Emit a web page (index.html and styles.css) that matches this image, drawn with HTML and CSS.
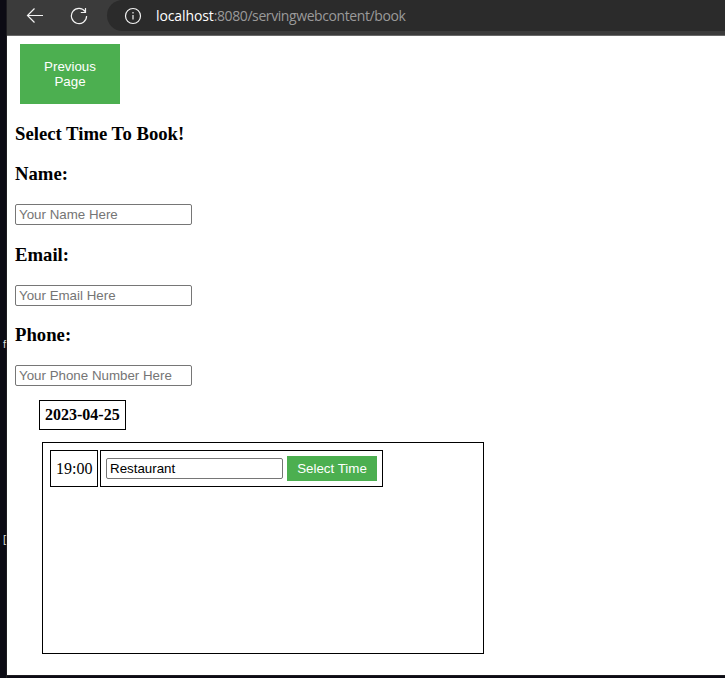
FILE: index.html
```html
<!DOCTYPE html>
<html lang="en">
<head>
<meta charset="utf-8">
<title>Book</title>
<link rel="stylesheet" href="styles.css">
</head>
<body>
<div class="desktop">
  <aside class="behind"><span class="behind-f">f</span><span class="behind-d">[</span></aside>
  <div class="window">
    <header class="toolbar">
      <svg class="icon back" width="18" height="16" viewBox="0 0 18 16"><path d="M17 7.5H1.5M8.5 .5L1.5 7.5L8.5 14.5"/></svg>
      <svg class="icon reload" width="18" height="18" viewBox="0 0 18 18"><path d="M15.2 4.6A7.6 7.6 0 1 0 16.6 9M15.5 1V5.5H10.8"/></svg>
      <div class="address">
        <svg class="icon info" width="18" height="18" viewBox="0 0 18 18"><circle cx="9" cy="9" r="7.5"/><path d="M9 8V12.5M9 5V6.4"/></svg>
        <span class="url"><b>localhost</b>:8080/servingwebcontent/book</span>
      </div>
    </header>
    <main class="page">
      <button class="previous">Previous Page</button>
      <h3>Select Time To Book!</h3>
      <h3>Name:</h3>
      <input class="field" type="text" placeholder="Your Name Here">
      <h3>Email:</h3>
      <input class="field" type="text" placeholder="Your Email Here">
      <h3>Phone:</h3>
      <input class="field" type="text" placeholder="Your Phone Number Here">
      <div class="date">2023-04-25</div>
      <section class="times">
        <div class="row">
          <div class="cell hour">19:00</div>
          <div class="cell choice">
            <input class="field" type="text" value="Restaurant">
            <button class="select">Select Time</button>
          </div>
        </div>
      </section>
    </main>
  </div>
</div>
</body>
</html>
```
FILE: styles.css
```css
* { box-sizing: border-box; }
body { margin: 0; background: #0c0b14; color: #000; font: 16px/18px "Liberation Serif", serif; }
.desktop { display: flex; height: 678px; overflow: hidden; }
.behind { width: 7px; flex: none; padding: 337px 0 0 3px; border-right: 1px solid #1d1c20; color: #ddd; font: 11px/15px "Liberation Sans", sans-serif; }
.behind span { display: block; }
.behind-d { margin-top: 180px; }
.window { flex: 1; height: 676px; background: #fff; border-bottom: 1px solid #1d1c20; }
.toolbar { display: flex; height: 36px; padding-left: 19px; background: #3b3b3b; border-bottom: 1px solid #686868; overflow: hidden; }
.icon { flex: none; fill: none; stroke: #f2f2f2; stroke-width: 1.2; }
.back { margin-top: 8px; }
.reload { margin: 7px 0 0 26px; }
.address { display: flex; flex: 1; height: 31px; margin-left: 19px; padding-left: 17px; background: #2b2b2b; border-radius: 16px 0 0 16px; }
.info { margin-top: 7px; }
.url { margin-left: 14px; color: #9a9a9a; font: 14px/32px "Open Sans", sans-serif; letter-spacing: -0.41px; white-space: nowrap; }
.url b { color: #fff; font-weight: 400; letter-spacing: -0.1px; }
.page { padding: 8px; }
button { display: block; border: 0; border-radius: 0; background: #4caf50; color: #fff; font: 13.333px/15px "Liberation Sans", sans-serif; text-align: center; }
.previous { width: 100px; height: 60px; margin-left: 5px; padding: 15px 20px; }
h3 { margin: 18.72px 0; font-size: 18.72px; line-height: 22px; font-weight: 700; }
.field { display: block; width: 177px; height: 21px; padding: 1px 3px; border: 1px solid #767676; border-radius: 2px; outline: 0; background: #fff; color: #000; font: 13.333px "Liberation Sans", sans-serif; }
.field::placeholder { color: #757575; }
.date { width: 87px; height: 30px; margin: 14px 0 0 24px; padding: 5px; border: 1px solid #000; font-weight: 700; white-space: nowrap; }
.times { width: 442px; height: 212px; margin: 12px 0 0 27px; padding: 7px; border: 1px solid #000; }
.row { display: flex; gap: 2px; }
.cell { display: flex; align-items: center; height: 37px; padding: 5px; border: 1px solid #000; }
.hour { width: 48px; }
.choice { width: 283px; gap: 4px; }
.select { width: 90px; height: 25px; padding: 5px 0; white-space: nowrap; }
```
